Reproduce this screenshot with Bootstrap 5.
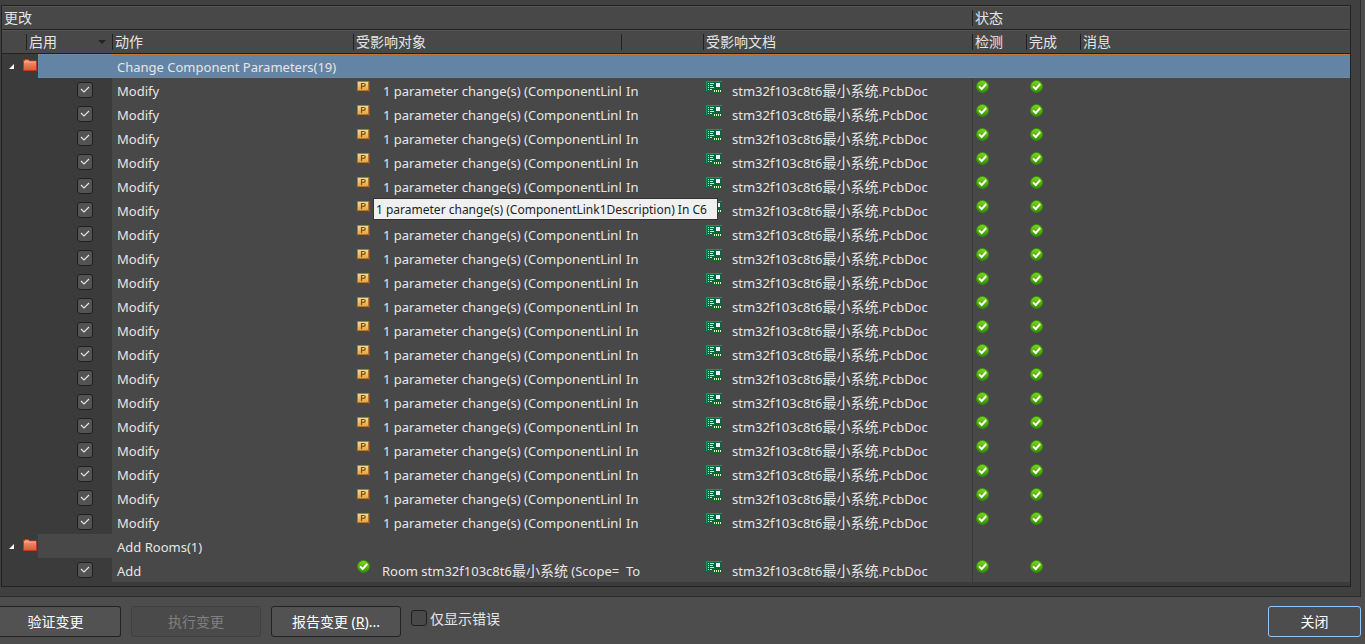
<!DOCTYPE html>
<html lang="zh-CN">
<head>
<meta charset="utf-8">
<meta name="viewport" content="width=device-width, initial-scale=1">
<title>工程变更指令</title>
<link href="https://cdn.jsdelivr.net/npm/bootstrap@5.3.0/dist/css/bootstrap.min.css" rel="stylesheet">
<style>
body { font-family: "Noto Sans", "Noto Sans CJK SC", sans-serif; font-size: 13px; line-height: 20px; color: #e6e6e6; background: #4d4d4d; }
.frame { background: #404040; border-right: 1px solid #2b2b2b; border-bottom: 1px solid #2b2b2b; margin-right: 4px; padding: 5px 9px 9px 1px; }
.grid-box { background: #3b3b3b; border: 1px solid #222; padding-bottom: 4px; }
.eco { table-layout: fixed; width: 100%; border-collapse: separate; border-spacing: 0; margin: 0; }
.eco th { height: 24px; padding: 0; font-weight: 400; font-size: 14px; background: #484848; border-top: 1px solid #545454; border-bottom: 1px solid #222; }
.eco th > span { display: flex; align-items: center; height: 16px; line-height: 16px; padding: 0 6px 0 2px; border-left: 1px solid #222; }
.eco th.no-sep > span { border-left: 0; }
.eco td { height: 24px; padding: 0; background-color: #484848; vertical-align: top; white-space: nowrap; }
.eco td.tree { background: #3b3b3b; }
.eco td.check-col { border-left: 1px solid #393939; }
.eco td.act { padding: 3px 0 0 5px; }
.eco .selected td:not(.tree) {
  background: repeating-linear-gradient(90deg, #c07c3c 0 1px, #6384a5 1px 2px) top / 100% 1px no-repeat,
    repeating-linear-gradient(90deg, #8f8a80 0 1px, #6384a5 1px 2px) bottom / 100% 1px no-repeat, #6384a5;
}
.eco .selected td.edge { border-left: 1px dotted #c07c3c; }
.folder { padding: 5px 0 0 7px; gap: 9px; }
.folder svg:first-child { margin-top: 5px; }
.item { display: flex; height: 24px; overflow: hidden; }
.item > svg { flex: none; margin: 3px 0 0 4px; }
.item > .txt { padding-top: 3px; }
.han { font-size: 14px; }
.obj > svg { margin-right: 13px; }
.doc > svg { margin: 3px 10px 0 3px; }
.room > svg { margin: 2px 12px 0 4px; }
.mark-ok { padding: 2px 0 0 4px; }
.check-col .mark-ok { padding-left: 3px; }
.form-check-input.tick { display: block; width: 16px; height: 16px; margin: 0; border: 1px solid #1f1f1f; border-radius: 3px; background-color: #535353; }
.form-check-input.tick:checked { background-size: 14px 14px; background-image: url("data:image/svg+xml,%3Csvg xmlns='http://www.w3.org/2000/svg' viewBox='0 0 14 14'%3E%3Cpath d='M3 6l3 3 5-5' fill='none' stroke='%23e0e0e0' stroke-width='1.2'/%3E%3C/svg%3E"); }
.eco .form-check-input.tick { margin: 4px 0 0 75px; }
.hint { left: 20px; top: 0; width: 345px; height: 22px; padding: 1px 2px; color: #222; background: #f0f0f0; border: 1px solid #333; font-size: 12px; line-height: 20px; }
.bar { padding: 9px 4px 8px 0; gap: 10px; }
.tool { width: 130px; height: 31px; padding: 0; font-size: 14px; line-height: 20px; color: #fff; background: #525252; border: 1px solid #222; border-radius: 3px; }
.tool:hover { color: #fff; background: #5a5a5a; border-color: #222; }
.tool:disabled { color: #808080; background: #4a4a4a; border-color: #404040; opacity: 1; }
.tool-first { width: 121px; padding-right: 9px; border-left: 0; border-radius: 0 3px 3px 0; }
.tool-close, .tool-close:hover { width: 93px; border-color: #94c4f4; background: #4d4d4d; }
.only { gap: 3px; }
.only .form-check-input.tick { margin-top: 4px; background-color: #494949; }
.only label { font-size: 14px; padding-top: 3px; }
</style>
</head>
<body>
<svg width="0" height="0" class="position-absolute" aria-hidden="true">
  <defs>
    <linearGradient id="gold" x2="0" y2="1"><stop stop-color="#f8dc98"/><stop offset="1" stop-color="#e0a440"/></linearGradient>
    <linearGradient id="red" x2="0" y2="1"><stop stop-color="#f49a78"/><stop offset="1" stop-color="#dd5a38"/></linearGradient>
    <linearGradient id="green" x2="0" y2="1"><stop stop-color="#84d91c"/><stop offset="1" stop-color="#2c9000"/></linearGradient>
  </defs>
</svg>

<main class="frame">
  <div class="grid-box">
    <table class="eco">
      <colgroup>
        <col style="width:24px"><col style="width:12px"><col style="width:74px"><col style="width:241px"><col style="width:268px"><col style="width:82px"><col style="width:269px"><col style="width:54px"><col style="width:54px"><col>
      </colgroup>
      <thead>
        <tr>
          <th colspan="7" class="no-sep"><span>更改</span></th>
          <th colspan="3"><span>状态</span></th>
        </tr>
        <tr>
          <th class="no-sep"></th>
          <th colspan="2"><span class="justify-content-between">启用
            <svg width="8" height="5" viewBox="0 0 8 5"><path d="M0 0h8L4 4z" fill="#222"/></svg></span></th>
          <th><span>动作</span></th>
          <th><span>受影响对象</span></th>
          <th><span></span></th>
          <th><span>受影响文档</span></th>
          <th><span>检测</span></th>
          <th><span>完成</span></th>
          <th><span>消息</span></th>
        </tr>
      </thead>
      <tbody id="changes"></tbody>
    </table>
  </div>
</main>

<footer class="bar d-flex align-items-start">
  <button type="button" class="btn tool tool-first">验证变更</button>
  <button type="button" class="btn tool" disabled>执行变更</button>
  <button type="button" class="btn tool">报告变更 (<u>R</u>)...</button>
  <div class="only d-flex align-items-start">
    <input type="checkbox" class="form-check-input tick" id="errors">
    <label for="errors">仅显示错误</label>
  </div>
  <button type="button" class="btn tool tool-close ms-auto">关闭</button>
</footer>

<script src="https://cdn.jsdelivr.net/npm/bootstrap@5.3.0/dist/js/bootstrap.bundle.min.js"></script>
<script>
const okIcon = '<svg width="13" height="13" viewBox="0 0 13 13"><circle cx="6.5" cy="6.5" r="6" fill="url(#green)" stroke="#3a8a10"/><path d="M3 6.3l2.700 2.700 4.500-5" fill="none" stroke="#fff" stroke-width="1.9"/></svg>';
const paramIcon = '<svg width="13" height="12" viewBox="0 0 13 12"><path d="M11 0h2v12l-2-2z" fill="#d82c00"/><path d="M.5.5h11v9H.5z" fill="url(#gold)" stroke="#b07a28"/><path d="M4.500 8V2.500h2.200q1.500 0 1.500 1.400T6.700 5.300H4.500" fill="none" stroke="#8a4a10" stroke-width="1.2"/></svg>';
const pcbIcon = '<svg width="16" height="12" viewBox="0 0 16 12"><path d="M0 0h16v12H7v-2H0z" fill="#06683f"/><path d="M0 0h16v1H1v9H0z" fill="#149a62"/><path d="M2 2h1v1H2zM2 4h1v1H2zM2 6h1v1H2zM2 8h1v1H2zM4 2h4v1H4zM4 4h3v1H4zM4 6h4v1H4zM4 8h2v1H4z" fill="#b8f0d4"/><path d="M10 2h4v4h-4z" fill="#f2f2f2"/><path d="M8 9h1v2H8zM10 9h1v2h-1zM12 9h1v2h-1zM14 9h1v2h-1z" fill="#f5eeb0"/></svg>';
const folderIcon = '<svg width="14" height="13" viewBox="0 0 14 13"><path d="M.5 11.500V1.500h1L2 .5h3.500l1 1.500h7v9.500z" fill="url(#red)" stroke="#b93c1c"/><path d="M1 3h12" stroke="#f8b090"/></svg>';
const arrowIcon = '<svg width="5" height="5" viewBox="0 0 5 5"><path d="M5 0v5H0z" fill="#fff"/></svg>';
const board = 'stm32f103c8t6<span class="han">最小系统</span>';

const groups = [
  { name: 'Change Component Parameters(19)', selected: true,
    rows: Array.from({ length: 19 }, () => ({ action: 'Modify', kind: 'obj', icon: paramIcon, text: '1 parameter change(s) (ComponentLink', link: 'In' })) },
  { name: 'Add Rooms(1)',
    rows: [{ action: 'Add', kind: 'room', icon: okIcon, text: `Room ${board} (Scope=`, link: 'To' }] }
];
groups[0].rows[5].hint = '1 parameter change(s) (ComponentLink1Description) In C6';

let html = '';
for (const g of groups) {
  html += `<tr class="${g.selected ? 'selected' : ''}">
    <td class="tree" colspan="2"><div class="d-flex align-items-start folder">${arrowIcon}${folderIcon}</div></td>
    <td class="edge"></td><td class="act" colspan="4">${g.name}</td>
    <td class="${g.selected ? '' : 'check-col'}"></td><td></td><td></td></tr>`;
  for (const r of g.rows) {
    html += `<tr>
      <td class="tree" colspan="3"><input type="checkbox" class="form-check-input tick" aria-label="${r.action}" checked></td>
      <td class="act">${r.action}</td>
      <td class="position-relative"><div class="item ${r.kind}">${r.icon}<span class="txt">${r.text}</span></div>${r.hint ? `<div class="hint position-absolute z-3" role="tooltip">${r.hint}</div>` : ''}</td>
      <td class="act">${r.link}</td>
      <td><div class="item doc">${pcbIcon}<span class="txt">${board}.PcbDoc</span></div></td>
      <td class="check-col"><div class="mark-ok d-flex">${okIcon}</div></td>
      <td><div class="mark-ok d-flex">${okIcon}</div></td>
      <td></td></tr>`;
  }
}
document.getElementById('changes').innerHTML = html;
</script>
</body>
</html>
